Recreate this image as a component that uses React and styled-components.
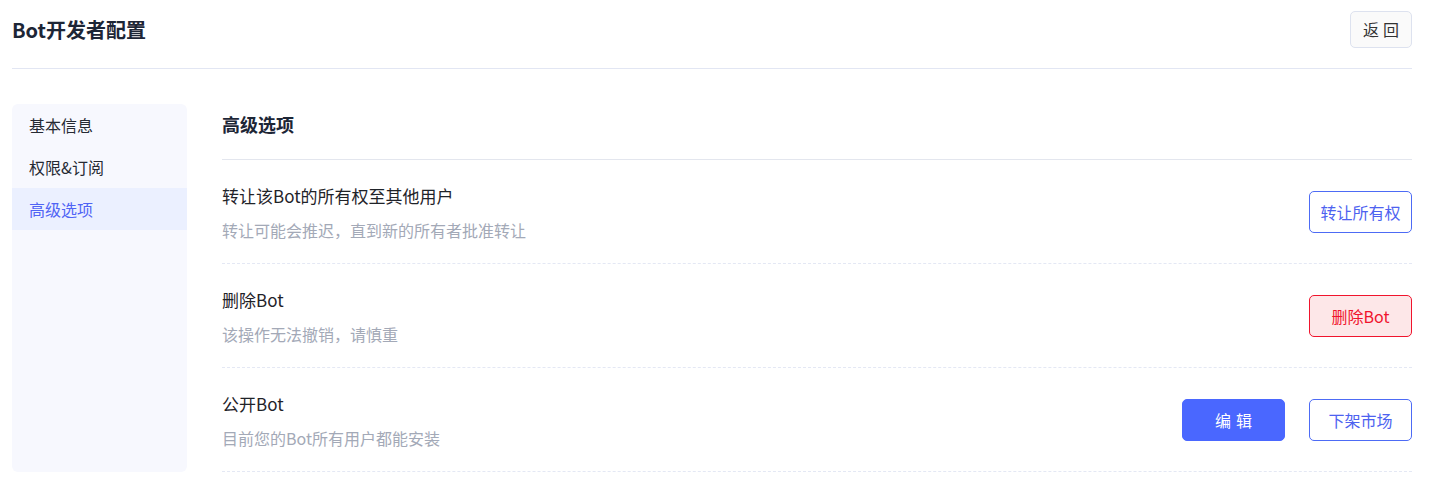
import React from "react";
import styled, { createGlobalStyle } from "styled-components";

const GlobalStyle = createGlobalStyle`
  body {
    margin: 0;
    background: #ffffff;
    font-family: "Noto Sans CJK SC", "Noto Sans", sans-serif;
    color: #1f2329;
  }
`;

const Page = styled.div`
  padding: 0 19px 0 12px;
`;

const Header = styled.div`
  height: 69px;
  display: flex;
  align-items: center;
  justify-content: space-between;
  border-bottom: 1px solid #e2e6f3;
  box-sizing: border-box;
  padding-bottom: 10px;
`;

const PageTitle = styled.h1`
  margin: 0;
  font-size: 20px;
  font-weight: 700;
  color: #1d2636;
`;

const BackButton = styled.button`
  width: 62px;
  height: 37px;
  border: 1px solid #dde2ef;
  background: #fafafa;
  border-radius: 5px;
  font-family: inherit;
  font-size: 16px;
  color: #333;
  letter-spacing: 4px;
  padding: 0 0 0 4px;
`;

const Body = styled.div`
  display: flex;
  gap: 35px;
  margin-top: 35px;
`;

const Sidebar = styled.div`
  width: 175px;
  flex-shrink: 0;
  background: #f7f8fe;
  border-radius: 6px;
  overflow: hidden;
`;

const NavItem = styled.div`
  height: 42px;
  display: flex;
  align-items: center;
  padding-left: 17px;
  font-size: 16px;
  color: ${(p) => (p.$active ? "#5064f5" : "#262a33")};
  background: ${(p) => (p.$active ? "#ebf0ff" : "transparent")};
`;

const Main = styled.div`
  flex: 1;
`;

const SectionTitle = styled.div`
  height: 56px;
  display: flex;
  align-items: center;
  font-size: 18px;
  font-weight: 700;
  color: #1d2636;
  border-bottom: 1px solid #e3e6ee;
  box-sizing: border-box;
  padding-bottom: 16px;
`;

const Row = styled.div`
  height: 104px;
  display: flex;
  align-items: center;
  justify-content: space-between;
  border-bottom: 1px dashed #e4e8f4;
  box-sizing: border-box;
`;

const Info = styled.div`
  display: flex;
  flex-direction: column;
  gap: 10px;
  padding-top: 2px;
`;

const RowTitle = styled.div`
  font-size: 17px;
  color: #1f2329;
  line-height: 24px;
`;

const RowDesc = styled.div`
  font-size: 16px;
  color: #a3a9b7;
  line-height: 24px;
`;

const Actions = styled.div`
  display: flex;
  gap: 24px;
`;

const variants = {
  outline: "border: 1px solid #4d6bf5; background: #fff; color: #4d62f0;",
  danger: "border: 1px solid #f0142d; background: #fde7e8; color: #f0142d;",
  primary: "border: 1px solid #4a67ff; background: #4a67ff; color: #fff;",
};

const ActionButton = styled.button`
  width: 103px;
  height: 42px;
  border-radius: 5px;
  font-family: inherit;
  font-size: 16px;
  padding: 0;
  letter-spacing: ${(p) => (p.$spaced ? "5px" : "0")};
  text-indent: ${(p) => (p.$spaced ? "5px" : "0")};
  ${(p) => variants[p.$variant]}
`;

const rows = [
  {
    title: "转让该Bot的所有权至其他用户",
    desc: "转让可能会推迟，直到新的所有者批准转让",
    actions: [{ label: "转让所有权", variant: "outline" }],
  },
  {
    title: "删除Bot",
    desc: "该操作无法撤销，请慎重",
    actions: [{ label: "删除Bot", variant: "danger" }],
  },
  {
    title: "公开Bot",
    desc: "目前您的Bot所有用户都能安装",
    actions: [
      { label: "编辑", variant: "primary", spaced: true },
      { label: "下架市场", variant: "outline" },
    ],
  },
];

export default function App() {
  return (
    <>
      <GlobalStyle />
      <Page>
        <Header>
          <PageTitle>Bot开发者配置</PageTitle>
          <BackButton>返回</BackButton>
        </Header>
        <Body>
          <Sidebar>
            <NavItem>基本信息</NavItem>
            <NavItem>权限&amp;订阅</NavItem>
            <NavItem $active>高级选项</NavItem>
          </Sidebar>
          <Main>
            <SectionTitle>高级选项</SectionTitle>
            {rows.map((r) => (
              <Row key={r.title}>
                <Info>
                  <RowTitle>{r.title}</RowTitle>
                  <RowDesc>{r.desc}</RowDesc>
                </Info>
                <Actions>
                  {r.actions.map((a) => (
                    <ActionButton key={a.label} $variant={a.variant} $spaced={a.spaced}>
                      {a.label}
                    </ActionButton>
                  ))}
                </Actions>
              </Row>
            ))}
          </Main>
        </Body>
      </Page>
    </>
  );
}
